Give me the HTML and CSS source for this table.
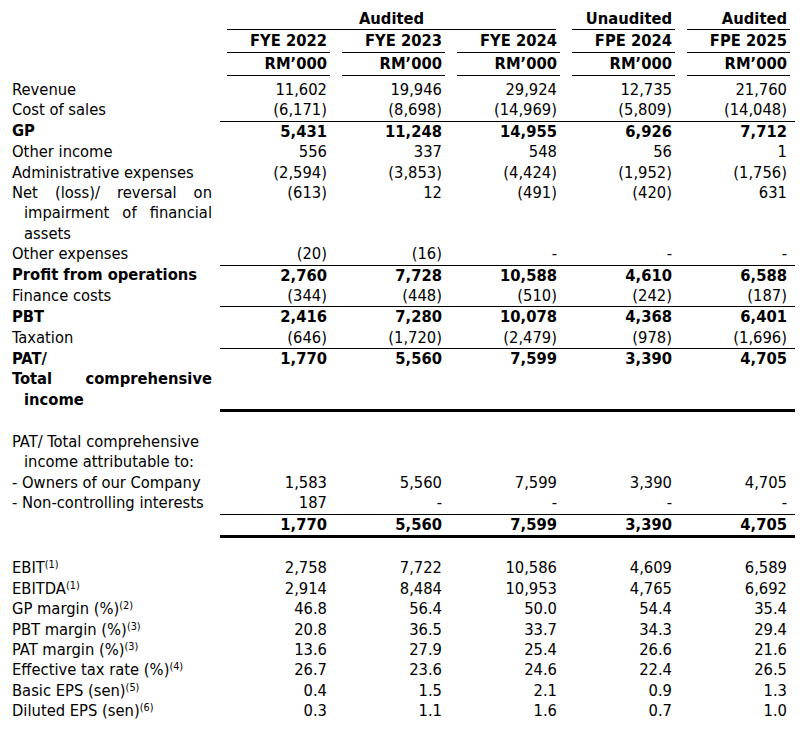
FILE: index.html
```html
<!DOCTYPE html>
<html>
<head>
<meta charset="utf-8">
<link rel="stylesheet" href="styles.css">
</head>
<body>
<table class="fin">
  <colgroup>
    <col class="c-lab"><col class="c-num"><col class="c-num"><col class="c-num"><col class="c-num"><col class="c-num">
  </colgroup>
  <tbody>
    <tr class="h1">
      <td class="lab"></td>
      <td colspan="3"><div class="hd ctr">Audited</div></td>
      <td><div class="hd">Unaudited</div></td>
      <td><div class="hd">Audited</div></td>
    </tr>
    <tr class="h2">
      <td class="lab"></td>
      <td><div class="hd">FYE 2022</div></td>
      <td><div class="hd">FYE 2023</div></td>
      <td><div class="hd">FYE 2024</div></td>
      <td><div class="hd">FPE 2024</div></td>
      <td><div class="hd">FPE 2025</div></td>
    </tr>
    <tr class="h2">
      <td class="lab"></td>
      <td><div class="hd">RM’000</div></td>
      <td><div class="hd">RM’000</div></td>
      <td><div class="hd">RM’000</div></td>
      <td><div class="hd">RM’000</div></td>
      <td><div class="hd">RM’000</div></td>
    </tr>

    <tr class="first">
      <td class="lab">Revenue</td>
      <td class="n">11,602</td><td class="n">19,946</td><td class="n">29,924</td><td class="n">12,735</td><td class="n">21,760</td>
    </tr>
    <tr>
      <td class="lab">Cost of sales</td>
      <td class="n">(6,171)</td><td class="n">(8,698)</td><td class="n">(14,969)</td><td class="n">(5,809)</td><td class="n">(14,048)</td>
    </tr>
    <tr class="rule b">
      <td class="lab">GP</td>
      <td class="n">5,431</td><td class="n">11,248</td><td class="n">14,955</td><td class="n">6,926</td><td class="n">7,712</td>
    </tr>
    <tr>
      <td class="lab">Other income</td>
      <td class="n">556</td><td class="n">337</td><td class="n">548</td><td class="n">56</td><td class="n">1</td>
    </tr>
    <tr>
      <td class="lab">Administrative expenses</td>
      <td class="n">(2,594)</td><td class="n">(3,853)</td><td class="n">(4,424)</td><td class="n">(1,952)</td><td class="n">(1,756)</td>
    </tr>
    <tr>
      <td class="lab">
        <div class="jl">Net (loss)/ reversal on</div>
        <div class="jl ind">impairment of financial</div>
        <div class="ind">assets</div>
      </td>
      <td class="n">(613)</td><td class="n">12</td><td class="n">(491)</td><td class="n">(420)</td><td class="n">631</td>
    </tr>
    <tr>
      <td class="lab">Other expenses</td>
      <td class="n">(20)</td><td class="n">(16)</td><td class="n">-</td><td class="n">-</td><td class="n">-</td>
    </tr>
    <tr class="rule b">
      <td class="lab">Profit from operations</td>
      <td class="n">2,760</td><td class="n">7,728</td><td class="n">10,588</td><td class="n">4,610</td><td class="n">6,588</td>
    </tr>
    <tr>
      <td class="lab">Finance costs</td>
      <td class="n">(344)</td><td class="n">(448)</td><td class="n">(510)</td><td class="n">(242)</td><td class="n">(187)</td>
    </tr>
    <tr class="rule b">
      <td class="lab">PBT</td>
      <td class="n">2,416</td><td class="n">7,280</td><td class="n">10,078</td><td class="n">4,368</td><td class="n">6,401</td>
    </tr>
    <tr>
      <td class="lab">Taxation</td>
      <td class="n">(646)</td><td class="n">(1,720)</td><td class="n">(2,479)</td><td class="n">(978)</td><td class="n">(1,696)</td>
    </tr>
    <tr class="rule b thick">
      <td class="lab">
        <div>PAT/</div>
        <div class="jl">Total comprehensive</div>
        <div class="ind">income</div>
      </td>
      <td class="n">1,770</td><td class="n">5,560</td><td class="n">7,599</td><td class="n">3,390</td><td class="n">4,705</td>
    </tr>
    <tr class="gap"><td colspan="6"></td></tr>
    <tr>
      <td class="lab">
        <div>PAT/ Total comprehensive</div>
        <div class="ind">income attributable to:</div>
      </td>
      <td class="n"></td><td class="n"></td><td class="n"></td><td class="n"></td><td class="n"></td>
    </tr>
    <tr>
      <td class="lab">- Owners of our Company</td>
      <td class="n">1,583</td><td class="n">5,560</td><td class="n">7,599</td><td class="n">3,390</td><td class="n">4,705</td>
    </tr>
    <tr>
      <td class="lab">- Non-controlling interests</td>
      <td class="n">187</td><td class="n">-</td><td class="n">-</td><td class="n">-</td><td class="n">-</td>
    </tr>
    <tr class="rule b thick">
      <td class="lab"></td>
      <td class="n">1,770</td><td class="n">5,560</td><td class="n">7,599</td><td class="n">3,390</td><td class="n">4,705</td>
    </tr>
    <tr class="gap"><td colspan="6"></td></tr>
    <tr>
      <td class="lab">EBIT<sup>(1)</sup></td>
      <td class="n">2,758</td><td class="n">7,722</td><td class="n">10,586</td><td class="n">4,609</td><td class="n">6,589</td>
    </tr>
    <tr>
      <td class="lab">EBITDA<sup>(1)</sup></td>
      <td class="n">2,914</td><td class="n">8,484</td><td class="n">10,953</td><td class="n">4,765</td><td class="n">6,692</td>
    </tr>
    <tr>
      <td class="lab">GP margin (%)<sup>(2)</sup></td>
      <td class="n">46.8</td><td class="n">56.4</td><td class="n">50.0</td><td class="n">54.4</td><td class="n">35.4</td>
    </tr>
    <tr>
      <td class="lab">PBT margin (%)<sup>(3)</sup></td>
      <td class="n">20.8</td><td class="n">36.5</td><td class="n">33.7</td><td class="n">34.3</td><td class="n">29.4</td>
    </tr>
    <tr>
      <td class="lab">PAT margin (%)<sup>(3)</sup></td>
      <td class="n">13.6</td><td class="n">27.9</td><td class="n">25.4</td><td class="n">26.6</td><td class="n">21.6</td>
    </tr>
    <tr>
      <td class="lab">Effective tax rate (%)<sup>(4)</sup></td>
      <td class="n">26.7</td><td class="n">23.6</td><td class="n">24.6</td><td class="n">22.4</td><td class="n">26.5</td>
    </tr>
    <tr>
      <td class="lab">Basic EPS (sen)<sup>(5)</sup></td>
      <td class="n">0.4</td><td class="n">1.5</td><td class="n">2.1</td><td class="n">0.9</td><td class="n">1.3</td>
    </tr>
    <tr>
      <td class="lab">Diluted EPS (sen)<sup>(6)</sup></td>
      <td class="n">0.3</td><td class="n">1.1</td><td class="n">1.6</td><td class="n">0.7</td><td class="n">1.0</td>
    </tr>
  </tbody>
</table>
</body>
</html>
```

FILE: styles.css
```css
html, body {
  background: #ffffff;
}

body {
  margin: 8px;
  font-family: "DejaVu Sans Condensed", "DejaVu Sans", "Liberation Sans", sans-serif;
  font-size: 16.4px;
  color: #000000;
}

.fin {
  border-collapse: collapse;
  border-spacing: 0;
  table-layout: fixed;
  width: 787px;
}

.c-lab {
  width: 212px;
}

.c-num {
  width: 115px;
}

.fin td {
  padding: 0;
  line-height: 20.4px;
  vertical-align: top;
}

.fin td.lab {
  padding: 0 8px 0 4px;
  text-align: left;
}

.fin td.n {
  text-align: right;
  padding-right: 8px;
}

.hd {
  margin: 0 5px 0 7px;
  padding-right: 3px;
  border-bottom: 1px solid #000;
  text-align: right;
  font-weight: bold;
  line-height: 22px;
}

.h1 .hd {
  line-height: 21px;
}

.hd.ctr {
  text-align: center;
  margin-right: 9px;
  padding-right: 0;
}

.fin tr.first td {
  padding-top: 4px;
}

.jl {
  text-align: justify;
  text-align-last: justify;
}

.ind {
  padding-left: 12px;
}

.rule td.n {
  border-top: 1px solid #000;
}

.thick td.n {
  border-bottom: 3px solid #000;
}

.b td {
  font-weight: bold;
}

.gap td {
  height: 20.4px;
}

sup {
  font-size: 0.66em;
  line-height: 0;
  vertical-align: 0.5em;
}
```
